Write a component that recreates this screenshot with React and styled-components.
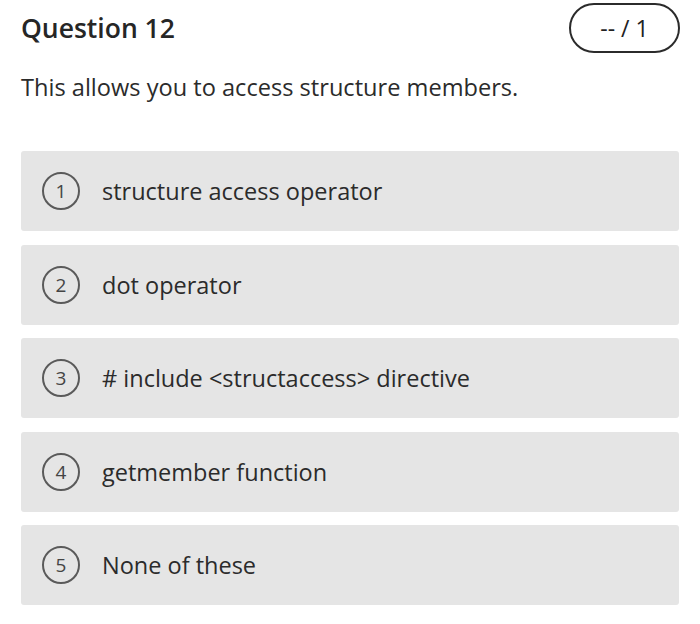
import React from "react";
import styled, { createGlobalStyle } from "styled-components";

const Global = createGlobalStyle`
  html, body { margin: 0; padding: 0; background: #fff; }
  body { font-family: "Open Sans", "Noto Sans", sans-serif; color: #2b2b2b; }
`;

const Page = styled.div`
  width: 700px;
  height: 624px;
  box-sizing: border-box;
  padding: 3px 21px 0 21px;
  display: flex;
  flex-direction: column;
`;

const Header = styled.div`
  display: flex;
  justify-content: space-between;
  align-items: center;
  height: 50px;
`;

const Title = styled.h1`
  margin: 0;
  font-size: 26.5px;
  font-weight: 600;
  color: #262626;
`;

const Score = styled.div`
  box-sizing: border-box;
  width: 111px;
  height: 50px;
  border: 2px solid #2b2b2b;
  border-radius: 25px;
  display: flex;
  align-items: center;
  justify-content: center;
  font-size: 23px;
  color: #222;
  margin-right: -1px;
`;

const Prompt = styled.p`
  margin: 19px 0 0 0;
  font-size: 23.6px;
  line-height: 30px;
  color: #2b2b2b;
`;

const Options = styled.div`
  margin-top: 49px;
  display: flex;
  flex-direction: column;
  gap: 13.5px;
`;

const Option = styled.div`
  height: 80px;
  background: #e5e5e5;
  border-radius: 3px;
  display: flex;
  align-items: center;
  padding-left: 21px;
`;

const Num = styled.span`
  box-sizing: border-box;
  width: 38px;
  height: 38px;
  border: 2px solid #5a5a5a;
  border-radius: 50%;
  display: flex;
  align-items: center;
  justify-content: center;
  font-size: 19px;
  color: #444;
  flex: none;
`;

const Label = styled.span`
  margin-left: 22px;
  font-size: 23.5px;
  color: #2b2b2b;
`;

const items = [
  "structure access operator",
  "dot operator",
  "# include <structaccess> directive",
  "getmember function",
  "None of these",
];

export default function App() {
  return (
    <Page>
      <Global />
      <Header>
        <Title>Question 12</Title>
        <Score>-- / 1</Score>
      </Header>
      <Prompt>This allows you to access structure members.</Prompt>
      <Options>
        {items.map((t, i) => (
          <Option key={i}>
            <Num>{i + 1}</Num>
            <Label>{t}</Label>
          </Option>
        ))}
      </Options>
    </Page>
  );
}
